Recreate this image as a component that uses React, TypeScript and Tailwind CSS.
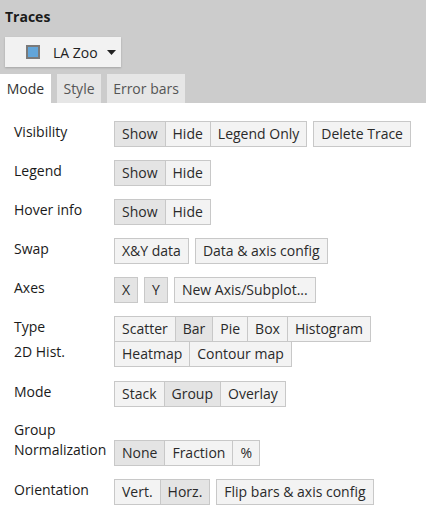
import React from "react";

type B = { t: string; sel?: boolean };

const font = { fontFamily: '"Open Sans", "Noto Sans", sans-serif' };

function Group({ items }: { items: B[] }) {
  return (
    <div className="flex">
      {items.map((b, i) => (
        <div
          key={i}
          className={
            "h-[26px] px-[7px] flex items-center border border-[#c8c8c8] text-[14px] text-[#2a2a2a] leading-none " +
            (i > 0 ? "-ml-px " : "") +
            (b.sel ? "bg-[#e4e4e4]" : "bg-[#f3f3f3]")
          }
        >
          {b.t}
        </div>
      ))}
    </div>
  );
}

function Row({
  label,
  groups,
  className = "",
}: {
  label: React.ReactNode;
  groups: B[][];
  className?: string;
}) {
  return (
    <div className={"flex " + className}>
      <div className="w-[100px] shrink-0 text-[14px] text-[#1a1a1a] leading-[20px] pt-[1px]">
        {label}
      </div>
      <div className="flex gap-[6px]">
        {groups.map((g, i) => (
          <Group key={i} items={g} />
        ))}
      </div>
    </div>
  );
}

export default function App() {
  return (
    <div className="w-[426px] h-[519px] bg-white overflow-hidden" style={font}>
      <div className="bg-[#cccccc] h-[103px] flex flex-col">
        <div className="pl-[5px] pt-[6px] text-[14px] font-bold text-[#1a1a1a] leading-[22px]">
          Traces
        </div>
        <div className="pl-[5px] pt-[9px]">
          <div className="w-[116px] h-[30px] bg-[#f2f2f2] shadow-[0_1px_2px_rgba(0,0,0,0.2)] flex items-center pl-[21px]">
            <div className="w-[14px] h-[14px] border-2 border-[#7a7a7a] bg-[#62a5d9]" />
            <span className="ml-[13px] text-[14px] text-[#222]">LA Zoo</span>
            <svg className="ml-[9px]" width="9" height="5" viewBox="0 0 9 5">
              <path d="M0 0 L9 0 L4.5 5 Z" fill="#222" />
            </svg>
          </div>
        </div>
        <div className="flex gap-[6px] mt-auto h-[29px]">
          <div className="w-[51px] bg-white flex items-center justify-center text-[14px] text-[#333]">
            Mode
          </div>
          <div className="w-[44px] bg-[#e6e6e6] flex items-center justify-center text-[14px] text-[#555]">
            Style
          </div>
          <div className="w-[78px] bg-[#e6e6e6] flex items-center justify-center text-[14px] text-[#555]">
            Error bars
          </div>
        </div>
      </div>
      <div className="pl-[14px] pt-[18px] flex flex-col">
        <Row
          label="Visibility"
          groups={[
            [{ t: "Show", sel: true }, { t: "Hide" }, { t: "Legend Only" }],
            [{ t: "Delete Trace" }],
          ]}
        />
        <Row
          className="mt-[13px]"
          label="Legend"
          groups={[[{ t: "Show", sel: true }, { t: "Hide" }]]}
        />
        <Row
          className="mt-[13px]"
          label="Hover info"
          groups={[[{ t: "Show", sel: true }, { t: "Hide" }]]}
        />
        <Row
          className="mt-[13px]"
          label="Swap"
          groups={[[{ t: "X&Y data" }], [{ t: "Data & axis config" }]]}
        />
        <Row
          className="mt-[13px]"
          label="Axes"
          groups={[
            [{ t: "X", sel: true }],
            [{ t: "Y", sel: true }],
            [{ t: "New Axis/Subplot..." }],
          ]}
        />
        <Row
          className="mt-[13px]"
          label="Type"
          groups={[
            [
              { t: "Scatter" },
              { t: "Bar", sel: true },
              { t: "Pie" },
              { t: "Box" },
              { t: "Histogram" },
            ],
          ]}
        />
        <Row
          className="-mt-px"
          label="2D Hist."
          groups={[[{ t: "Heatmap" }, { t: "Contour map" }]]}
        />
        <Row
          className="mt-[14px]"
          label="Mode"
          groups={[[{ t: "Stack" }, { t: "Group", sel: true }, { t: "Overlay" }]]}
        />
        <div className="flex mt-[13px] items-end">
          <div className="w-[100px] shrink-0 text-[14px] text-[#1a1a1a] leading-[20px] pb-[6px]">
            Group
            <br />
            Normalization
          </div>
          <Group items={[{ t: "None", sel: true }, { t: "Fraction" }, { t: "%" }]} />
        </div>
        <Row
          className="mt-[13px]"
          label="Orientation"
          groups={[[{ t: "Vert." }, { t: "Horz.", sel: true }], [{ t: "Flip bars & axis config" }]]}
        />
      </div>
    </div>
  );
}
